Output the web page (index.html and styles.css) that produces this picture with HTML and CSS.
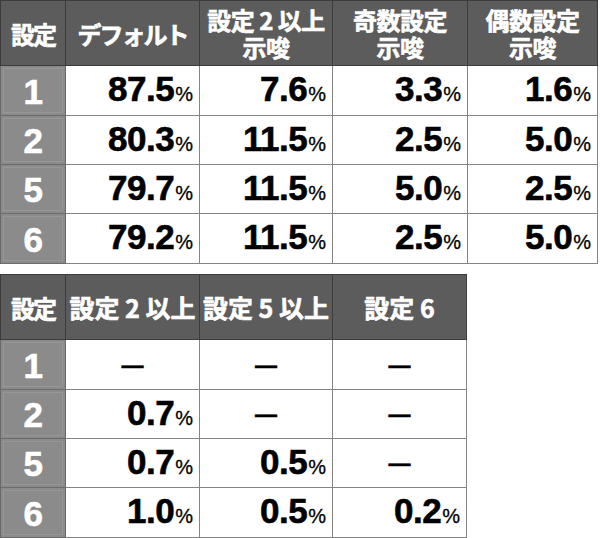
FILE: index.html
```html
<!DOCTYPE html>
<html lang="ja">
<head>
<meta charset="utf-8">
<link rel="stylesheet" href="styles.css">
</head>
<body>
<table class="tbl tbl-main">
  <colgroup>
    <col class="c-set"><col class="c-a"><col class="c-b"><col class="c-c"><col class="c-d">
  </colgroup>
  <tr class="head">
    <th class="h-set">設定</th>
    <th class="h-narrow">デフォルト</th>
    <th>設定 2 以上<br>示唆</th>
    <th>奇数設定<br>示唆</th>
    <th>偶数設定<br>示唆</th>
  </tr>
  <tr class="r1"><td class="lbl">1</td><td>87.5<span class="pc">%</span></td><td>7.6<span class="pc">%</span></td><td>3.3<span class="pc">%</span></td><td>1.6<span class="pc">%</span></td></tr>
  <tr class="r2"><td class="lbl">2</td><td>80.3<span class="pc">%</span></td><td>11.5<span class="pc">%</span></td><td>2.5<span class="pc">%</span></td><td>5.0<span class="pc">%</span></td></tr>
  <tr class="r3"><td class="lbl">5</td><td>79.7<span class="pc">%</span></td><td>11.5<span class="pc">%</span></td><td>5.0<span class="pc">%</span></td><td>2.5<span class="pc">%</span></td></tr>
  <tr class="r4"><td class="lbl">6</td><td>79.2<span class="pc">%</span></td><td>11.5<span class="pc">%</span></td><td>2.5<span class="pc">%</span></td><td>5.0<span class="pc">%</span></td></tr>
</table>

<table class="tbl tbl-sub">
  <colgroup>
    <col class="c-set"><col class="c-a"><col class="c-b"><col class="c-e">
  </colgroup>
  <tr class="head">
    <th class="h-set">設定</th>
    <th class="h-wide">設定 2 以上</th>
    <th class="h-wide">設定 5 以上</th>
    <th class="h-wide">設定 6</th>
  </tr>
  <tr class="r1"><td class="lbl">1</td><td class="dash">—</td><td class="dash">—</td><td class="dash">—</td></tr>
  <tr class="r2"><td class="lbl">2</td><td>0.7<span class="pc">%</span></td><td class="dash">—</td><td class="dash">—</td></tr>
  <tr class="r3"><td class="lbl">5</td><td>0.7<span class="pc">%</span></td><td>0.5<span class="pc">%</span></td><td class="dash">—</td></tr>
  <tr class="r4"><td class="lbl">6</td><td>1.0<span class="pc">%</span></td><td>0.5<span class="pc">%</span></td><td>0.2<span class="pc">%</span></td></tr>
</table>
</body>
</html>
```

FILE: styles.css
```css
html, body {
  margin: 0;
  padding: 0;
  background: #ffffff;
}

.tbl {
  border-collapse: collapse;
  table-layout: fixed;
  border-spacing: 0;
}

.tbl-main { width: 598px; }
.tbl-sub { width: 467px; margin-top: 10px; }

.c-set { width: 65px; }
.c-a { width: 134px; }
.c-b { width: 133px; }
.c-c { width: 135px; }
.c-d { width: 130px; }
.c-e { width: 134px; }

.tbl th,
.tbl td {
  border: 1px solid #858585;
  padding: 0;
}

.head { height: 65px; }
.r1 { height: 50px; }
.r2 { height: 49px; }
.r3 { height: 49px; }
.r4 { height: 50px; }

.tbl th {
  background: #5c5c5c;
  border-color: #3c3c3c;
  color: #ffffff;
  font-family: "Noto Sans CJK JP", sans-serif;
  font-weight: 700;
  font-size: 24px;
  line-height: 27px;
  text-align: center;
  vertical-align: middle;
  letter-spacing: -0.5px;
  white-space: nowrap;
  -webkit-text-stroke: 0.6px #ffffff;
}

.tbl th.h-set {
  letter-spacing: -2px;
}

.tbl th.h-narrow {
  letter-spacing: -2px;
}

.tbl th.h-wide {
  font-size: 25px;
  letter-spacing: 0;
}

.tbl td {
  background: #ffffff;
  color: #000000;
  font-family: "Liberation Sans", Arial, sans-serif;
  font-weight: 700;
  font-size: 35px;
  line-height: 36px;
  text-align: right;
  vertical-align: middle;
  padding-right: 6px;
  padding-top: 2px;
  white-space: nowrap;
  -webkit-text-stroke: 0.6px #000000;
  letter-spacing: -0.5px;
}

.tbl td.lbl {
  background: #8b8b8b;
  border-color: #6a6a6a;
  color: #ffffff;
  text-align: center;
  padding-right: 0;
  -webkit-text-stroke: 0.6px #ffffff;
  box-shadow: inset 0 0 0 2px #8b8b8b, inset 0 0 0 3px #979797;
}

.pc {
  font-weight: 400;
  font-size: 20px;
  margin-left: 1px;
  -webkit-text-stroke: 0.3px #000000;
  letter-spacing: 0;
}

.tbl td.dash {
  text-align: center;
  padding-right: 0;
  font-family: "Liberation Sans", Arial, sans-serif;
  font-weight: 700;
  font-size: 22px;
  line-height: 30px;
  letter-spacing: 0;
  -webkit-text-stroke: 0.4px #000000;
}
```
